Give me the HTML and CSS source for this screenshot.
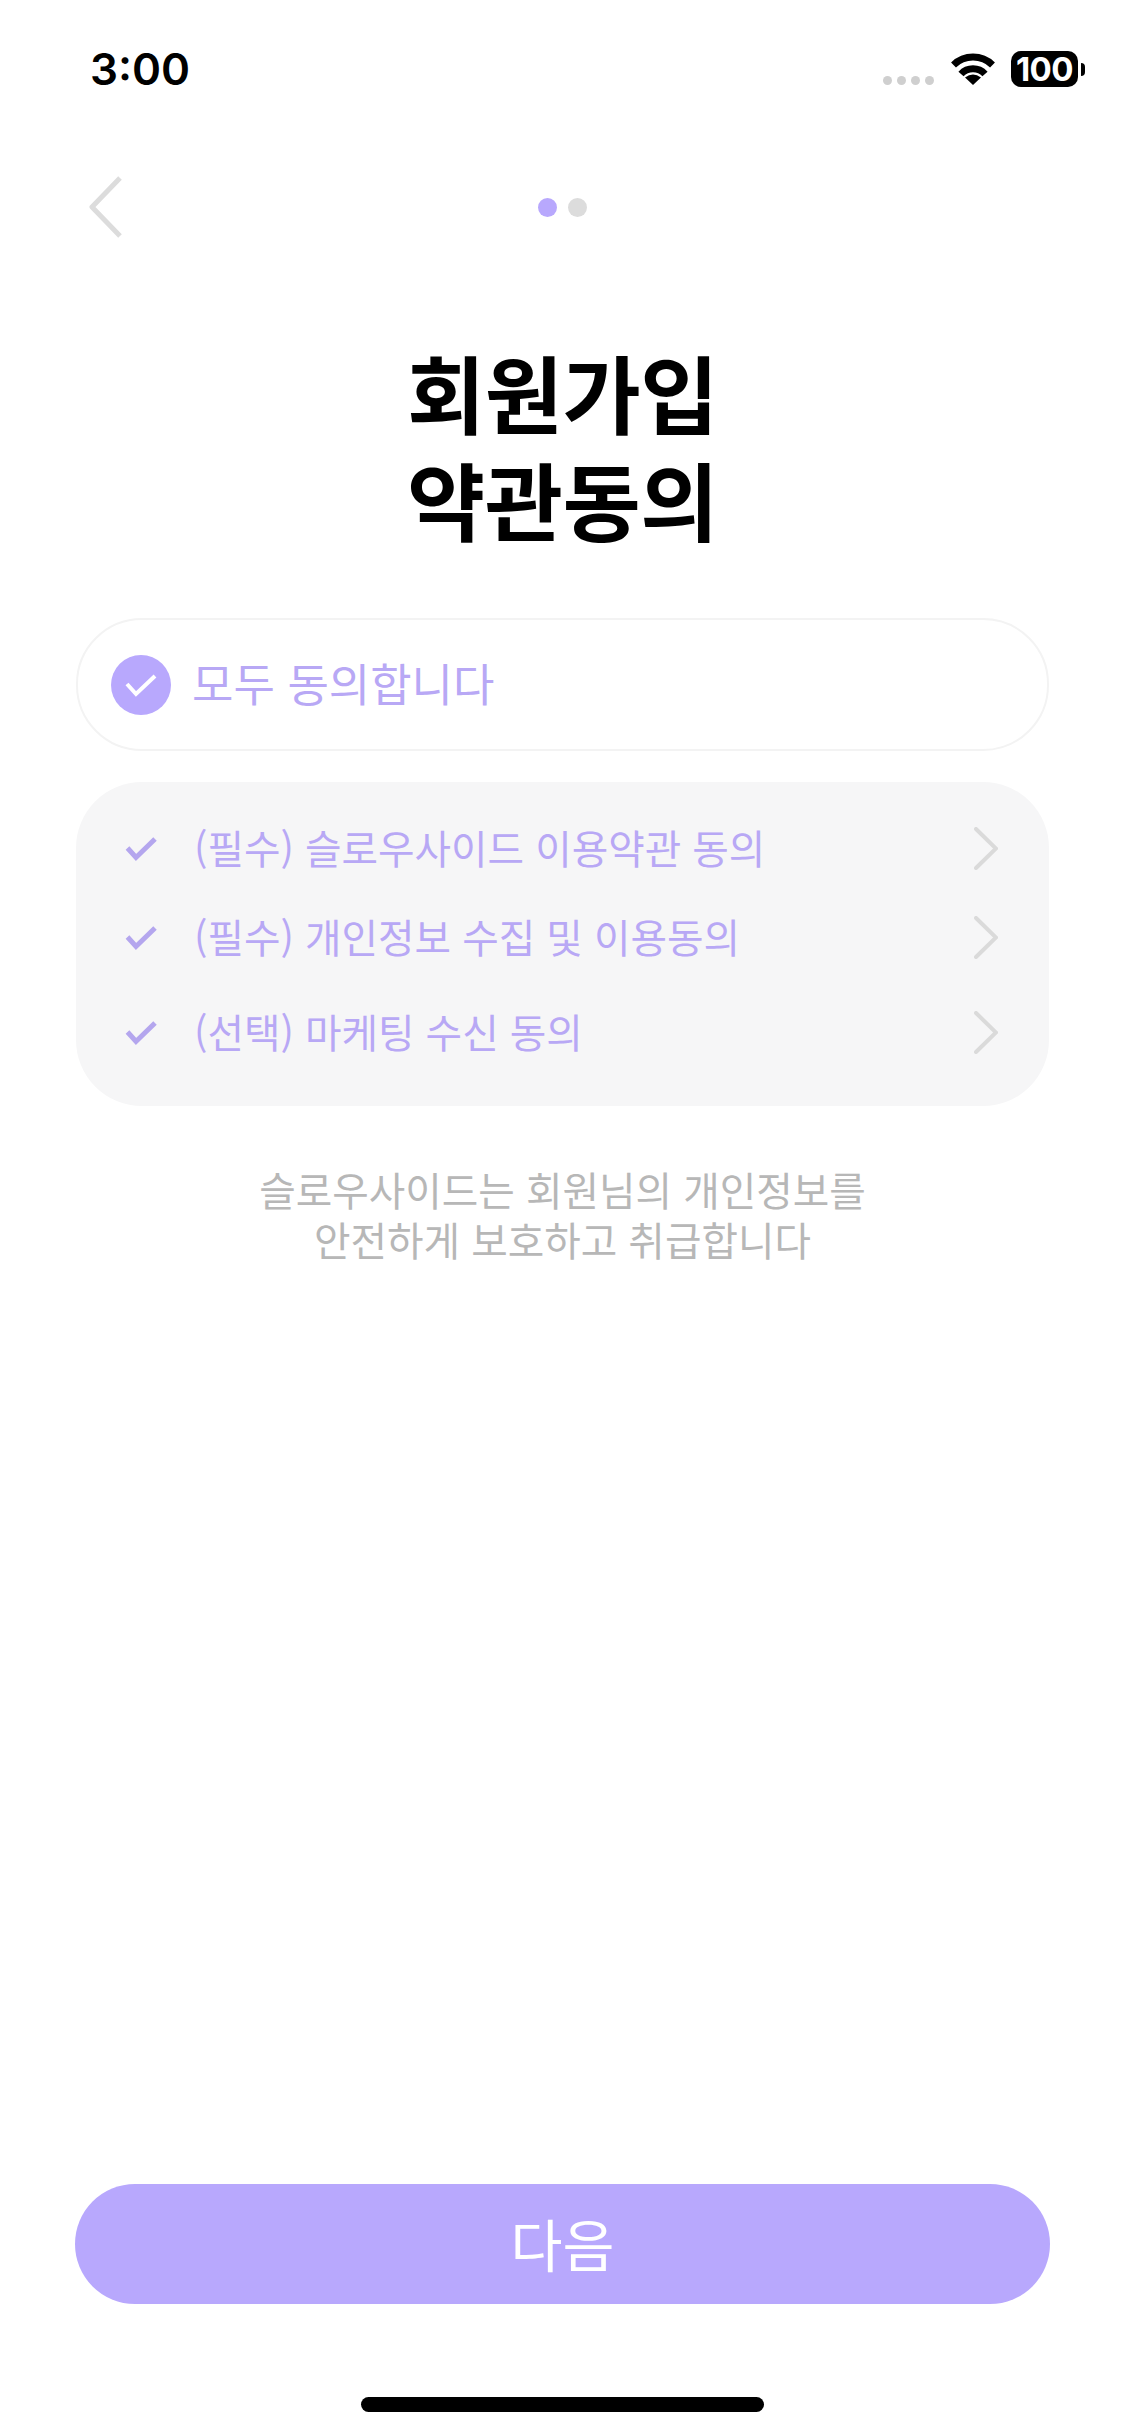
FILE: index.html
```html
<!DOCTYPE html>
<html lang="ko">
<head>
<meta charset="utf-8">
<title>회원가입 약관동의</title>
<link rel="stylesheet" href="styles.css">
</head>
<body>
<main class="screen">
  <header class="status">
    <span class="time">3:00</span>
    <div class="status-icons">
      <div class="signal"><i></i><i></i><i></i><i></i></div>
      <svg class="wifi" viewBox="0 0 46 33"><path class="wifi-arc" d="M3.5 13A28 28 0 0 1 42.500 13"/><path class="wifi-arc" d="M11 22A16.300 16.300 0 0 1 35 22"/><path class="wifi-dot" d="M23 33L15 25.500Q23 19.500 31 25.500Z"/></svg>
      <div class="battery"><span class="battery-body">100</span><span class="battery-cap"></span></div>
    </div>
  </header>

  <nav class="nav">
    <svg class="back" viewBox="0 0 33 62"><path d="M31 2L3 31L31 60"/></svg>
    <div class="steps"><i class="step on"></i><i class="step"></i></div>
  </nav>

  <h1 class="title">회원가입<br>약관동의</h1>

  <div class="all">
    <span class="all-check"><svg class="check-white" viewBox="0 0 32 24"><path d="M2 11L11 21L30 3"/></svg></span>
    <span class="all-label">모두 동의합니다</span>
  </div>

  <section class="terms">
    <div class="term">
      <svg class="check" viewBox="0 0 32 24"><path d="M2.500 11L11 20.500L30 2"/></svg>
      <span class="term-label">(필수) 슬로우사이드 이용약관 동의</span>
      <svg class="chev" viewBox="0 0 24 43"><path d="M2 2L22 21.500L2 41"/></svg>
    </div>
    <div class="term">
      <svg class="check" viewBox="0 0 32 24"><path d="M2.500 11L11 20.500L30 2"/></svg>
      <span class="term-label">(필수) 개인정보 수집 및 이용동의</span>
      <svg class="chev" viewBox="0 0 24 43"><path d="M2 2L22 21.500L2 41"/></svg>
    </div>
    <div class="term term-last">
      <svg class="check" viewBox="0 0 32 24"><path d="M2.500 11L11 20.500L30 2"/></svg>
      <span class="term-label">(선택) 마케팅 수신 동의</span>
      <svg class="chev" viewBox="0 0 24 43"><path d="M2 2L22 21.500L2 41"/></svg>
    </div>
  </section>

  <p class="note">슬로우사이드는 회원님의 개인정보를<br>안전하게 보호하고 취급합니다</p>

  <button class="next">다음</button>
  <div class="home"></div>
</main>
</body>
</html>
```
FILE: styles.css
```css
* { box-sizing: border-box; }
html, body { margin: 0; padding: 0; background: #fff; }
.screen {
  width: 1125px;
  height: 2436px;
  display: flex;
  flex-direction: column;
  padding: 0 76px;
  overflow: hidden;
  font-family: "Noto Sans CJK KR", "Noto Sans", sans-serif;
}
.status {
  height: 136px;
  padding: 51px 0 0 14px;
  margin-right: -36px;
  display: flex;
  justify-content: space-between;
  align-items: flex-start;
}
.time {
  font-family: Inter, sans-serif;
  font-weight: 600;
  font-size: 44px;
  line-height: 36px;
  color: #000;
}
.status-icons { display: flex; align-items: flex-start; }
.signal { display: flex; gap: 5px; margin-top: 25px; margin-right: 16px; }
.signal i { width: 9px; height: 9px; border-radius: 50%; background: #cfcfcf; }
.wifi { width: 46px; height: 33px; margin-top: 1px; margin-right: 15px; }
.wifi-arc { fill: none; stroke: #000; stroke-width: 7; }
.wifi-dot { fill: #000; }
.battery { display: flex; align-items: center; }
.battery-body {
  width: 67px;
  height: 36px;
  border-radius: 10px;
  background: #000;
  color: #fff;
  font-family: Inter, sans-serif;
  font-weight: 700;
  font-size: 33px;
  line-height: 36px;
  text-align: center;
  letter-spacing: -0.5px;
}
.battery-cap { width: 4px; height: 13px; margin-left: 3px; background: #000; border-radius: 0 7px 7px 0; }

.nav { height: 62px; margin-top: 40px; display: flex; align-items: center; padding-left: 13px; }
.back { width: 33px; height: 62px; flex: none; }
.back path { fill: none; stroke: #dcdcdc; stroke-width: 5; stroke-linejoin: round; }
.steps { display: flex; gap: 11px; margin-left: 416px; }
.step { width: 19px; height: 19px; border-radius: 50%; background: #dcdcdc; }
.step.on { background: #b8a8fd; }

.title {
  margin: 99px 0 0;
  text-align: center;
  font-size: 85px;
  line-height: 107px;
  font-weight: 700;
  color: #000;
  letter-spacing: -0.5px;
}

.all {
  height: 133px;
  margin-top: 67px;
  border: 2px solid #f3f3f3;
  border-radius: 66px;
  padding-left: 33px;
  display: flex;
  align-items: center;
  gap: 21px;
}
.all-check {
  width: 60px;
  height: 60px;
  border-radius: 50%;
  background: #b8a8fd;
  display: flex;
  align-items: center;
  justify-content: center;
}
.check-white { width: 32px; height: 24px; }
.check-white path { fill: none; stroke: #fff; stroke-width: 4; }
.all-label { font-size: 45px; line-height: 60px; margin-bottom: 3px; color: #b8a8f5; font-weight: 400; }

.terms {
  margin-top: 31px;
  height: 324px;
  border-radius: 66px;
  background: #f6f6f7;
  padding: 22px 51px 0 48px;
}
.term { height: 89px; display: flex; align-items: center; }
.term-last { margin-top: 6px; }
.check { width: 32px; height: 24px; flex: none; margin-left: 1px; overflow: visible; }
.check path { fill: none; stroke: #b4a6ee; stroke-width: 5; }
.term-label { flex: 1; margin-left: 37px; margin-bottom: 3px; font-size: 39.7px; line-height: 50px; color: #b8a8f5; }
.chev { width: 24px; height: 43px; flex: none; }
.chev path { fill: none; stroke: #dadada; stroke-width: 4; stroke-linecap: round; }

.note {
  margin: 58px 0 0;
  text-align: center;
  font-size: 39.7px;
  line-height: 50px;
  color: #b7b7b7;
}

.next {
  margin: auto -1px 0;
  height: 120px;
  border: 0;
  border-radius: 60px;
  background: #b8a8fd;
  color: #fff;
  font-family: inherit;
  font-size: 56.500px;
  padding: 0 0 5px;
  flex: none;
}
.home {
  width: 403px;
  height: 15px;
  flex: none;
  margin: 93px auto 24px;
  border-radius: 8px;
  background: #000;
}
```
